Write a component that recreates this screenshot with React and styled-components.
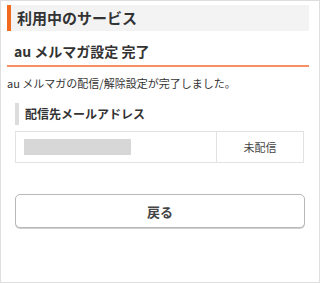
import React from "react";
import styled, { createGlobalStyle } from "styled-components";

const Global = createGlobalStyle`
  * { box-sizing: border-box; }
  html, body { margin: 0; padding: 0; background: #fff; }
  body { font-family: "Noto Sans CJK JP", "Noto Sans", sans-serif; color: #333; }
`;

const Frame = styled.div`
  width: 320px;
  height: 283px;
  border: 1px solid #dedede;
  padding: 4px 10px 0 6px;
  display: flex;
  flex-direction: column;
`;

const SectionHeader = styled.h1`
  margin: 0;
  height: 26px;
  line-height: 26px;
  background: #f3f3f3;
  border-left: 4px solid #f26a1f;
  padding-left: 6px;
  font-size: 15px;
  font-weight: 700;
  color: #333;
`;

const PageTitle = styled.h2`
  margin: 0;
  padding: 10px 0 4px 7px;
  line-height: 20px;
  font-size: 14px;
  font-weight: 700;
  color: #333;
  border-bottom: 2px solid #f58f64;
`;

const Message = styled.p`
  margin: 8px 0 0 0;
  line-height: 16px;
  font-size: 11px;
  color: #333;
`;

const SubHeading = styled.h3`
  margin: 12px 0 0 8px;
  line-height: 22px;
  border-left: 4px solid #dcdcdc;
  padding-left: 6px;
  font-size: 12px;
  font-weight: 700;
  color: #333;
`;

const Table = styled.div`
  margin: 6px 0 0 8px;
  width: 289px;
  height: 32px;
  border: 1px solid #e2e2e2;
  display: grid;
  grid-template-columns: 1fr 87px;
`;

const Cell = styled.div`
  display: flex;
  align-items: center;
  justify-content: ${(p) => (p.$center ? "center" : "flex-start")};
  padding-left: ${(p) => (p.$center ? "0" : "8px")};
  border-left: ${(p) => (p.$divider ? "1px solid #e2e2e2" : "none")};
  font-size: 11px;
  color: #444;
`;

const Masked = styled.div`
  width: 107px;
  height: 16px;
  background: #d7d7d7;
`;

const BackButton = styled.button`
  margin: 31px 0 0 8px;
  width: 290px;
  height: 34px;
  border: 1px solid #b8b8b8;
  border-radius: 5px;
  background: #fff;
  box-shadow: 0 1px 0 #d0d0d0;
  font-family: inherit;
  font-size: 13px;
  font-weight: 700;
  color: #444;
  cursor: pointer;
`;

export default function App() {
  return (
    <>
      <Global />
      <Frame>
        <SectionHeader>利用中のサービス</SectionHeader>
        <PageTitle>au メルマガ設定 完了</PageTitle>
        <Message>au メルマガの配信/解除設定が完了しました。</Message>
        <SubHeading>配信先メールアドレス</SubHeading>
        <Table>
          <Cell>
            <Masked />
          </Cell>
          <Cell $center $divider>未配信</Cell>
        </Table>
        <BackButton>戻る</BackButton>
      </Frame>
    </>
  );
}
